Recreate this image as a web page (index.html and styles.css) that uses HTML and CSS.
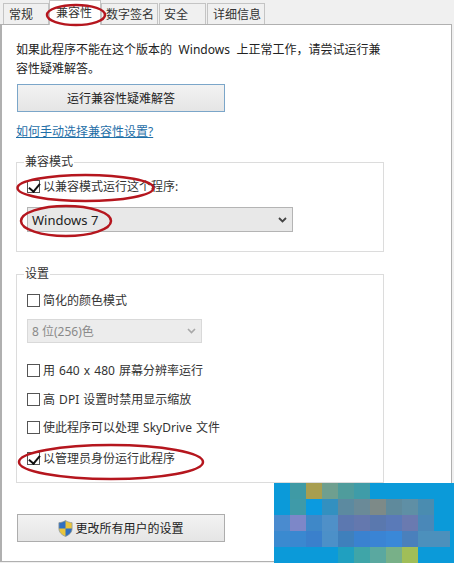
FILE: index.html
```html
<!DOCTYPE html>
<html lang="zh-CN">
<head>
    <meta charset="UTF-8">
    <meta name="viewport" content="width=device-width, initial-scale=1.0">
    <title>属性</title>
    <link rel="stylesheet" href="styles.css">
</head>
<body>
    <div class="dialog">
        <!-- Tabs -->
        <ul class="tabs">
            <li class="tab tab-general">常规</li>
            <li class="tab tab-active">兼容性</li>
            <li class="tab tab-sign">数字签名</li>
            <li class="tab tab-safe">安全</li>
            <li class="tab tab-detail">详细信息</li>
        </ul>

        <section class="panel">
            <p class="intro">如果此程序不能在这个版本的 Windows 上正常工作，请尝试运行兼容性疑难解答。</p>
            <button class="btn btn-focus" type="button">运行兼容性疑难解答</button>
            <a class="help-link" href="#">如何手动选择兼容性设置?</a>

            <!-- Compatibility mode -->
            <fieldset class="group group-mode">
                <legend>兼容模式</legend>
                <label class="check"><input type="checkbox" checked><span>以兼容模式运行这个程序:</span></label>
                <div class="combo combo-os">
                    <span>Windows 7</span>
                    <svg class="chevron" width="9" height="6" viewBox="0 0 9 6"><path d="M1 1l3.5 3.5L8 1" fill="none" stroke="#444" stroke-width="1.8"/></svg>
                </div>
            </fieldset>

            <!-- Settings -->
            <fieldset class="group group-settings">
                <legend>设置</legend>
                <label class="check"><input type="checkbox"><span>简化的颜色模式</span></label>
                <div class="combo combo-color">
                    <span>8 位(256)色</span>
                    <svg class="chevron" width="9" height="6" viewBox="0 0 9 6"><path d="M1 1l3.5 3.5L8 1" fill="none" stroke="#a8a8a8" stroke-width="1.6"/></svg>
                </div>
                <label class="check check-640"><input type="checkbox"><span>用 640 x 480 屏幕分辨率运行</span></label>
                <label class="check check-dpi"><input type="checkbox"><span>高 DPI 设置时禁用显示缩放</span></label>
                <label class="check check-sky"><input type="checkbox"><span>使此程序可以处理 SkyDrive 文件</span></label>
                <label class="check check-admin"><input type="checkbox" checked><span>以管理员身份运行此程序</span></label>
            </fieldset>

            <button class="btn btn-all" type="button">
                <svg class="shield" width="15" height="17" viewBox="0 0 14 16">
                    <path d="M7 .5C5 1.800 3 2.400.8 2.500v5.600c0 3.400 2.600 6 6.200 7.400 3.600-1.400 6.200-4 6.200-7.400V2.500C11 2.400 9 1.800 7 .5z" fill="#e9c53c"/>
                    <path d="M7 .5C5 1.800 3 2.400.8 2.500V8H7z" fill="#2f6fc0"/>
                    <path d="M7 8h6.200v.1c0 3.400-2.600 6-6.200 7.400z" fill="#2f6fc0"/>
                    <path d="M7 .5C5 1.800 3 2.400.8 2.500v5.600c0 3.400 2.600 6 6.200 7.400 3.600-1.400 6.200-4 6.200-7.400V2.500C11 2.400 9 1.800 7 .5z" fill="none" stroke="#8a97a3" stroke-width=".7"/>
                </svg>
                <span>更改所有用户的设置</span>
            </button>
        </section>

        <!-- Red hand drawn marks -->
        <svg class="marks" width="454" height="563" viewBox="0 0 454 563">
            <g fill="none" stroke="#b5161e" stroke-width="2.500">
                <ellipse cx="76" cy="15" rx="29" ry="10"/>
                <ellipse cx="85.500" cy="188" rx="68" ry="13"/>
                <ellipse cx="66" cy="221" rx="45" ry="15"/>
                <ellipse cx="111" cy="462" rx="92" ry="17"/>
            </g>
        </svg>

        <!-- Pixelated watermark -->
        <svg class="mosaic" width="180" height="80" viewBox="0 0 180 80" shape-rendering="crispEdges">
            <rect width="180" height="80" fill="#0b9ad9"/>
            <rect x="16" y="0" width="16" height="16" fill="#3f9aa5"/>
            <rect x="32" y="0" width="16" height="16" fill="#a89e50"/>
            <rect x="48" y="0" width="16" height="16" fill="#6f9f8f"/>
            <rect x="64" y="0" width="16" height="16" fill="#4f9c9c"/>
            <rect x="80" y="0" width="16" height="16" fill="#3f9ca8"/>
            <rect x="16" y="16" width="16" height="16" fill="#3f9aa8"/>
            <rect x="32" y="16" width="16" height="16" fill="#0b9ae0"/>
            <rect x="48" y="16" width="16" height="16" fill="#3390c0"/>
            <rect x="64" y="16" width="16" height="16" fill="#5c8aa0"/>
            <rect x="80" y="16" width="16" height="16" fill="#6a8a98"/>
            <rect x="96" y="16" width="16" height="16" fill="#7d8a88"/>
            <rect x="112" y="16" width="16" height="16" fill="#5f8a9c"/>
            <rect x="128" y="16" width="16" height="16" fill="#5f8fa5"/>
            <rect x="144" y="16" width="16" height="16" fill="#4a8cb0"/>
            <rect x="0" y="32" width="16" height="16" fill="#4a8bcf"/>
            <rect x="16" y="32" width="16" height="16" fill="#7d87c8"/>
            <rect x="32" y="32" width="16" height="16" fill="#3f88c8"/>
            <rect x="48" y="32" width="16" height="16" fill="#4f90c8"/>
            <rect x="64" y="32" width="16" height="16" fill="#5c78b0"/>
            <rect x="80" y="32" width="16" height="16" fill="#6478ae"/>
            <rect x="96" y="32" width="16" height="16" fill="#5a78ae"/>
            <rect x="112" y="32" width="16" height="16" fill="#5a7ab8"/>
            <rect x="128" y="32" width="16" height="16" fill="#6a7ab0"/>
            <rect x="144" y="32" width="16" height="16" fill="#4a88b8"/>
            <rect x="0" y="48" width="16" height="16" fill="#3a8ad0"/>
            <rect x="16" y="48" width="16" height="16" fill="#3a88d0"/>
            <rect x="32" y="48" width="16" height="16" fill="#3a80cc"/>
            <rect x="48" y="48" width="16" height="16" fill="#4c90c8"/>
            <rect x="64" y="48" width="16" height="16" fill="#3f80bc"/>
            <rect x="80" y="48" width="16" height="16" fill="#3a82d0"/>
            <rect x="96" y="48" width="16" height="16" fill="#3a84d4"/>
            <rect x="112" y="48" width="16" height="16" fill="#3a88d8"/>
            <rect x="128" y="48" width="16" height="16" fill="#4a80bc"/>
            <rect x="144" y="48" width="32" height="16" fill="#4c90bc"/>
            <rect x="64" y="64" width="16" height="16" fill="#20a0c0"/>
            <rect x="80" y="64" width="16" height="16" fill="#3fa5a8"/>
            <rect x="96" y="64" width="16" height="16" fill="#5aa8a0"/>
            <rect x="112" y="64" width="16" height="16" fill="#78b088"/>
            <rect x="128" y="64" width="16" height="16" fill="#a0be58"/>
        </svg>
    </div>
</body>
</html>
```

FILE: styles.css
```css
/* General Reset */
* {
    box-sizing: border-box;
}

html, body {
    margin: 0;
    height: 563px;
    overflow: hidden;
}

body {
    font-family: "Noto Sans", "Noto Sans CJK SC", sans-serif;
    font-size: 12px;
    color: #222;
    background-color: #f0f0f0;
}

.dialog {
    position: relative;
    width: 454px;
    height: 563px;
}

/* Tabs */
.tabs {
    list-style: none;
    margin: 0;
    padding: 0 0 0 3px;
    height: 24px;
    display: flex;
    align-items: flex-end;
}

.tab {
    height: 21px;
    margin-right: 1px;
    padding: 1px 0 0 5px;
    line-height: 19px;
    background-color: #f0f0f0;
    border: 1px solid #c4c4c4;
    border-bottom: none;
    color: #333;
}

.tab-general { width: 46px; }
.tab-sign { width: 57px; margin-left: 1px; padding-left: 4px; }
.tab-safe { width: 47px; padding-left: 4px; }
.tab-detail { width: 58px; padding-left: 5px; }

.tab-active {
    position: relative;
    z-index: 1;
    width: 52px;
    height: 25px;
    margin: 0 -1px -1px -1px;
    padding: 2px 0 0 6px;
    background-color: #fff;
}

/* Panel */
.panel {
    width: 452px;
    height: 538px;
    padding: 15px 0 0 14px;
    background-color: #fff;
    border: 1px solid #b0b0b0;
    border-left-width: 2px;
}

.intro {
    width: 365px;
    margin: 0;
    line-height: 19px;
    word-spacing: 3.5px;
}

/* Buttons */
.btn {
    display: flex;
    align-items: center;
    justify-content: center;
    width: 208px;
    height: 28px;
    margin-left: 1px;
    padding: 0;
    font: inherit;
    color: #222;
    border: 1px solid #adadad;
    background: linear-gradient(#f2f2f2, #e5e5e5);
}

.btn-focus {
    margin-top: 6px;
    border-color: #7ba6c9;
}

.btn-all {
    margin-top: 31px;
    gap: 2px;
}

.help-link {
    display: block;
    width: 142px;
    margin-top: 11px;
    line-height: 18px;
    color: #1f6fa8;
    text-decoration: underline;
}

/* Group boxes */
.group {
    width: 368px;
    margin: 0;
    padding: 0 0 0 10px;
    border: 1px solid #dcdcdc;
}

.group legend {
    margin-left: -3px;
    padding: 0 1px;
    line-height: 16px;
    color: #333;
}

.group-mode {
    height: 98px;
    margin-top: 13px;
}

.group-settings {
    height: 217px;
    margin-top: 14px;
}

/* Checkboxes */
.check {
    display: flex;
    align-items: center;
    gap: 3px;
    height: 18px;
    color: #333;
    word-spacing: 1px;
}

.check input {
    appearance: none;
    position: relative;
    width: 13px;
    height: 13px;
    margin: 0;
    border: 1px solid #555;
    background-color: #fff;
}

.check input:checked::after {
    content: "";
    position: absolute;
    left: 3px;
    top: 0;
    width: 5px;
    height: 9px;
    border: solid #111;
    border-width: 0 2px 2px 0;
    transform: rotate(40deg);
}

.group-mode .check { margin-top: 7px; }
.group-settings .check:first-of-type { margin-top: 9px; }
.check-640 { margin-top: 18px; }
.check-dpi { margin-top: 11px; }
.check-sky { margin-top: 10px; }
.check-admin { margin-top: 13px; }

/* Dropdowns */
.combo {
    display: flex;
    align-items: center;
    justify-content: space-between;
    height: 24px;
    padding: 0 5px 0 4px;
    border: 1px solid #b4b4b4;
    background-color: #e8e8e8;
}

.combo-os {
    width: 266px;
    height: 25px;
    margin-top: 12px;
    font-size: 13px;
}

.combo-color {
    width: 175px;
    margin-top: 10px;
    border-color: #d9d9d9;
    background-color: #ececec;
    color: #8a8a8a;
}

/* Overlays */
.marks {
    position: absolute;
    left: 0;
    top: 0;
    z-index: 2;
    pointer-events: none;
}

.mosaic {
    position: absolute;
    left: 274px;
    top: 483px;
    z-index: 2;
}
```
